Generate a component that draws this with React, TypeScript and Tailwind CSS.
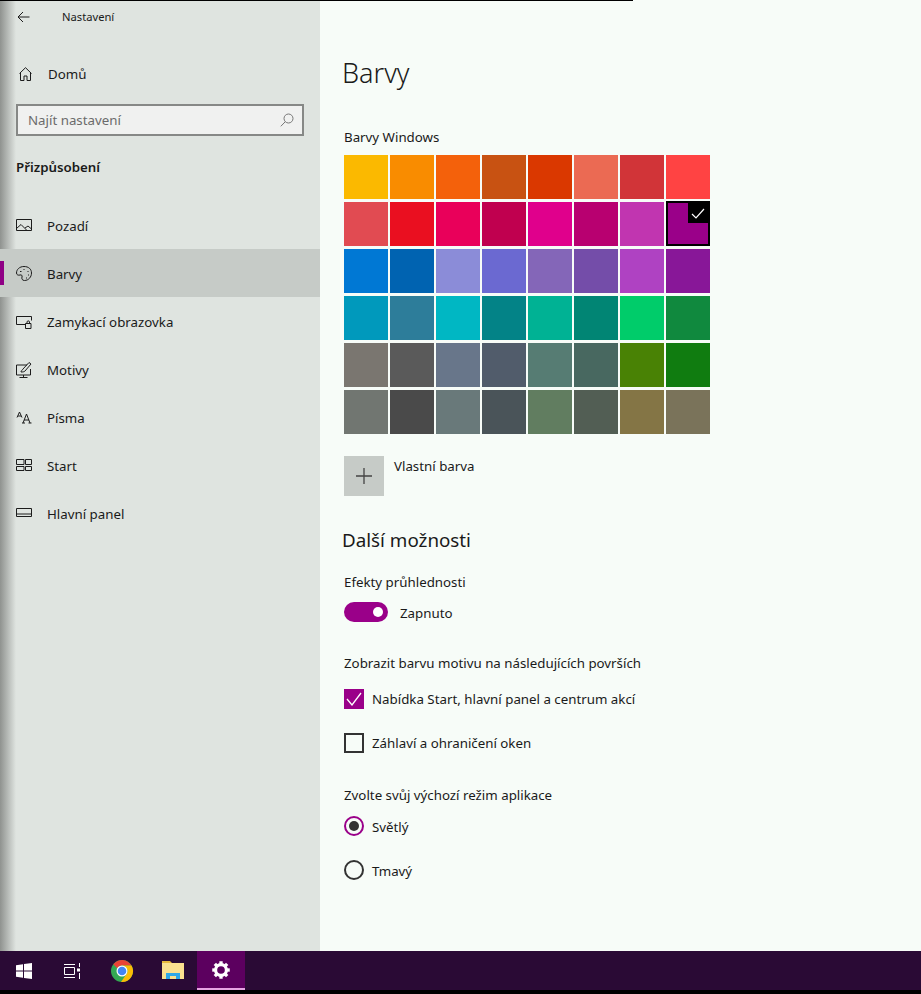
import React from 'react';

const swatches = [
    ['#fbb900', '#f98c00', '#f4610b', '#c85212', '#da3800', '#eb6a53', '#d13438', '#ff4343'],
    ['#e14b52', '#ea0f20', '#e9005a', '#c0004f', '#e0008c', '#b80070', '#c135b0', '#9a0089'],
    ['#0078d4', '#0063b1', '#8b8cd8', '#6b69d1', '#8466b8', '#744da9', '#af42c2', '#881798'],
    ['#0099bc', '#2d7d9a', '#00b7c3', '#038387', '#00b294', '#018574', '#00cc6a', '#10893e'],
    ['#7a7670', '#5a5a5a', '#68768a', '#515c6b', '#567c73', '#486860', '#498205', '#107c10'],
    ['#717671', '#4a4a4a', '#69797a', '#4a5459', '#617d60', '#525e54', '#847545', '#7a735a'],
];

const Line = ({ d }: { d: string }) => (
    <svg className="mt-0.5" width="16" height="16" viewBox="0 0 16 16" fill="none" stroke="#1c1c1c" strokeWidth="1">
        <path d={d} />
    </svg>
);

const menu = [
    { label: 'Pozadí', d: 'M.5 1.5h15v11H.5zM.5 10.500l4.500-4 6 6M9 10l3-2 3.500 3' },
    { label: 'Barvy', active: true, d: 'M8 .5C3.500.5.500 3.500.500 7c0 2 2 2.500 3.500 2 1.500-.500 2.500.500 2 2-.500 1.500 0 3.500 2.500 3.500 4 0 7-3.500 7-7.500S12.500.500 8 .500zM4 5.500h1.500M7.500 3.500h1M11.500 5.500h1M12 9h1M10 12h1' },
    { label: 'Zamykací obrazovka', d: 'M9 10.500H.5v-8h15v4M9.500 9.500h5.500v5H9.500zM11 9.500V8c0-1.500 2.500-1.500 2.500 0v1.500' },
    { label: 'Motivy', d: 'M11 3H.5v10h14V7M7.500 13v2.500M3.500 15.500h8M5 10c0-2 1.500-1.500 2-3L13 .5l2 1.500-6 7c-1 1-2.500 1-4 1z' },
    { label: 'Písma', d: 'M1 7.500L3.500 2l2.500 5.500M2 6h3M7 13l3.500-9 3.500 9M8 10h5M6 13h3M12.500 13h3' },
    { label: 'Start', d: 'M.5 1.500h7.500v5H.5zM9.500 1.500h6v5h-6zM.5 8.500h7.500v4H.5zM9.500 8.500h6v4h-6z' },
    { label: 'Hlavní panel', d: 'M.5 2.500h15v8H.5zM.5 8h15' },
];

const Row = ({ label, d, active }: { label: string; d: string; active?: boolean }) => (
    <div className={`relative h-12 flex items-center pl-4 gap-[15px] ${active ? 'bg-[#c6cbc7]' : ''}`}>
        {active && <div className="absolute left-0 top-3 h-6 w-1 bg-[#8f0085]" />}
        <Line d={d} />
        <span className="mt-1">{label}</span>
    </div>
);

const Swatch = ({ color, selected }: { color: string; selected: boolean }) => {
    if (!selected) return <div className="h-11 w-11" style={{ backgroundColor: color }} />;
    return (
        <div className="relative h-[45px] w-11 -mt-px border-2 border-black" style={{ backgroundColor: color }}>
            <div className="absolute right-0 top-0 h-5 w-5 bg-black flex items-center justify-center">
                <svg width="14" height="11" viewBox="0 0 14 11" fill="none" stroke="#fff" strokeWidth="1.200">
                    <path d="M1 6l4 4 8-9" />
                </svg>
            </div>
        </div>
    );
};

const Chrome = () => (
    <svg width="24" height="24" viewBox="0 0 24 24">
        <circle cx="12" cy="12" r="11" fill="#34a853" />
        <path d="M3.300 5.300A11 11 0 0 1 21.500 6.500L12 6.500A5.500 5.500 0 0 0 7.200 9.200Z" fill="#ea4335" />
        <path d="M21.500 6.500A11 11 0 0 1 11 23L16.700 14.800A5.500 5.500 0 0 0 12 6.500Z" fill="#fbbc05" />
        <circle cx="12" cy="12" r="5.500" fill="#fff" />
        <circle cx="12" cy="12" r="4.300" fill="#4285f4" />
    </svg>
);

const Gear = () => (
    <svg width="20" height="20" viewBox="0 0 24 24" fill="none" stroke="#fff">
        <circle cx="12" cy="12" r="6.500" strokeWidth="3.800" />
        {[0, 45, 90, 135, 180, 225, 270, 315].map((a) => (
            <path key={a} d="M12 5V1.500" strokeWidth="4" transform={`rotate(${a} 12 12)`} />
        ))}
    </svg>
);

export default function App() {
    return (
        <div className="relative h-[994px] w-[921px] overflow-hidden flex flex-col bg-black text-[13.3px] text-[#1a1a1a] font-['Noto_Sans',sans-serif]">
            <div className="absolute left-0 top-0 h-px w-[633px] bg-black z-10" />
            <div className="flex h-[951px] shrink-0">
                <aside className="relative w-80 shrink-0 bg-[#dfe4e0]">
                    <div className="absolute inset-y-0 left-0 w-4 bg-gradient-to-r from-[#8f928f] to-transparent" />
                    <div className="relative">
                        <div className="h-[34px] flex items-center pl-[17px]">
                            <svg width="13" height="12" viewBox="0 0 13 12" fill="none" stroke="#1c1c1c">
                                <path d="M12.500 6H1M6 1L1 6l5 5" />
                            </svg>
                            <span className="ml-[32px] text-[11.200px]">Nastavení</span>
                        </div>
                        <div className="h-[48px] mt-[15px] flex items-center pl-[19px] gap-4">
                            <svg className="mt-0.5" width="13" height="14" viewBox="0 0 13 14" fill="none" stroke="#1c1c1c">
                                <path d="M.5 6.500L6.500.7l6 5.800M1.500 5.500v8h3.500V9h3v4.500h3.500v-8" />
                            </svg>
                            <span className="mt-1">Domů</span>
                        </div>
                        <div className="mx-4 mt-[7px] h-8 border-2 border-[#868886] bg-[#f0f1f0] flex items-center justify-between pl-2.5 pr-2">
                            <span className="mt-0.5 text-[#6b6b6b]">Najít nastavení</span>
                            <svg width="14" height="14" viewBox="0 0 14 14" fill="none" stroke="#777">
                                <circle cx="8.500" cy="5.500" r="4.500" />
                                <path d="M5.200 8.800L.8 13.300" />
                            </svg>
                        </div>
                        <div className="mt-[21px] pl-4 leading-[20px] font-semibold">Přizpůsobení</div>
                        <div className="mt-[24px]">
                            {menu.map((m) => (
                                <Row key={m.label} {...m} />
                            ))}
                        </div>
                    </div>
                </aside>
                <main className="flex-1 bg-[#f7fcf8] pl-[22px]">
                    <h1 className="mt-[52px] text-[27px] leading-[42px] font-light">Barvy</h1>
                    <div className="mt-[33px] pl-0.5 leading-5">Barvy Windows</div>
                    <div className="mt-2 ml-0.5 grid w-[366px] grid-cols-[repeat(8,44px)] auto-rows-[44px] gap-x-0.5 gap-y-[3px]">
                        {swatches.flat().map((c, i) => (
                            <Swatch key={i} color={c} selected={i === 15} />
                        ))}
                    </div>
                    <div className="mt-[22px] ml-0.5 flex gap-2.5">
                        <div className="h-10 w-10 bg-[#c6cbc7] flex items-center justify-center">
                            <svg width="16" height="16" viewBox="0 0 16 16" stroke="#444" strokeWidth="1.300">
                                <path d="M8 0v16M0 8h16" />
                            </svg>
                        </div>
                        <span className="leading-5">Vlastní barva</span>
                    </div>
                    <h2 className="mt-[29px] text-[18.800px] leading-[30px]">Další možnosti</h2>
                    <div className="mt-[17px] ml-0.5 leading-5">Efekty průhlednosti</div>
                    <div className="mt-[9px] ml-0.5 flex items-center gap-3">
                        <div className="h-5 w-11 rounded-full bg-[#9a0089] flex items-center justify-end pr-[5px]">
                            <div className="h-2.5 w-2.5 rounded-full bg-white" />
                        </div>
                        <span className="mt-0.5 leading-5">Zapnuto</span>
                    </div>
                    <div className="mt-[30px] ml-0.5 leading-5">Zobrazit barvu motivu na následujících površích</div>
                    <div className="mt-4 ml-0.5 flex items-center gap-2 h-5">
                        <div className="h-5 w-5 bg-[#9a0089] flex items-center justify-center">
                            <svg width="16" height="14" viewBox="0 0 16 14" fill="none" stroke="#fff" strokeWidth="1.300">
                                <path d="M1 7l5 6L15 1" />
                            </svg>
                        </div>
                        <span className="mt-0.5">Nabídka Start, hlavní panel a centrum akcí</span>
                    </div>
                    <div className="mt-6 ml-0.5 flex items-center gap-2 h-5">
                        <div className="h-5 w-5 border-2 border-[#333]" />
                        <span className="mt-0.5">Záhlaví a ohraničení oken</span>
                    </div>
                    <div className="mt-8 ml-0.5 leading-5">Zvolte svůj výchozí režim aplikace</div>
                    <div className="mt-[11px] ml-0.5 flex items-center gap-2 h-5">
                        <div className="h-5 w-5 rounded-full border-2 border-[#9a0089] flex items-center justify-center">
                            <div className="h-2.5 w-2.5 rounded-full bg-[#333]" />
                        </div>
                        <span className="mt-1">Světlý</span>
                    </div>
                    <div className="mt-6 ml-0.5 flex items-center gap-2 h-5">
                        <div className="h-5 w-5 rounded-full border-2 border-[#333]" />
                        <span className="mt-1">Tmavý</span>
                    </div>
                </main>
            </div>
            <footer className="h-[39px] shrink-0 bg-[#2a0a35] flex">
                <div className="w-[48px] flex items-center justify-center">
                    <svg width="16" height="16" viewBox="0 0 16 16" fill="#fff">
                        <path d="M0 2.300l7-1v6.300H0zM8 1.100L16 0v7.600H8zM0 8.500h7v6.300l-7-1zM8 8.500h8V16l-8-1.100z" />
                    </svg>
                </div>
                <div className="w-[48px] flex items-center justify-center">
                    <svg width="16" height="16" viewBox="0 0 16 16" fill="none" stroke="#fff">
                        <path d="M.5 4.500h10v7H.5zM0 1.500h11M0 14.500h11M15.500 0v4M15.500 10v6" />
                        <rect x="13" y="5.500" width="3" height="3" fill="#fff" stroke="none" />
                    </svg>
                </div>
                <div className="w-[52px] flex items-center justify-center">
                    <Chrome />
                </div>
                <div className="w-[49px] flex items-center justify-center">
                    <svg width="22" height="19" viewBox="0 0 22 19">
                        <path d="M0 0h8l2 2h12v3H0z" fill="#e8b93c" />
                        <rect y="2" width="22" height="16" fill="#fbe08f" />
                        <path d="M4 18v-6h14v6h-4v-3h-6v3z" fill="#2fa8e8" />
                    </svg>
                </div>
                <div className="w-12 bg-[#5c005f] border-b-2 border-[#e6a3e2] flex items-center justify-center">
                    <Gear />
                </div>
            </footer>
        </div>
    );
}
